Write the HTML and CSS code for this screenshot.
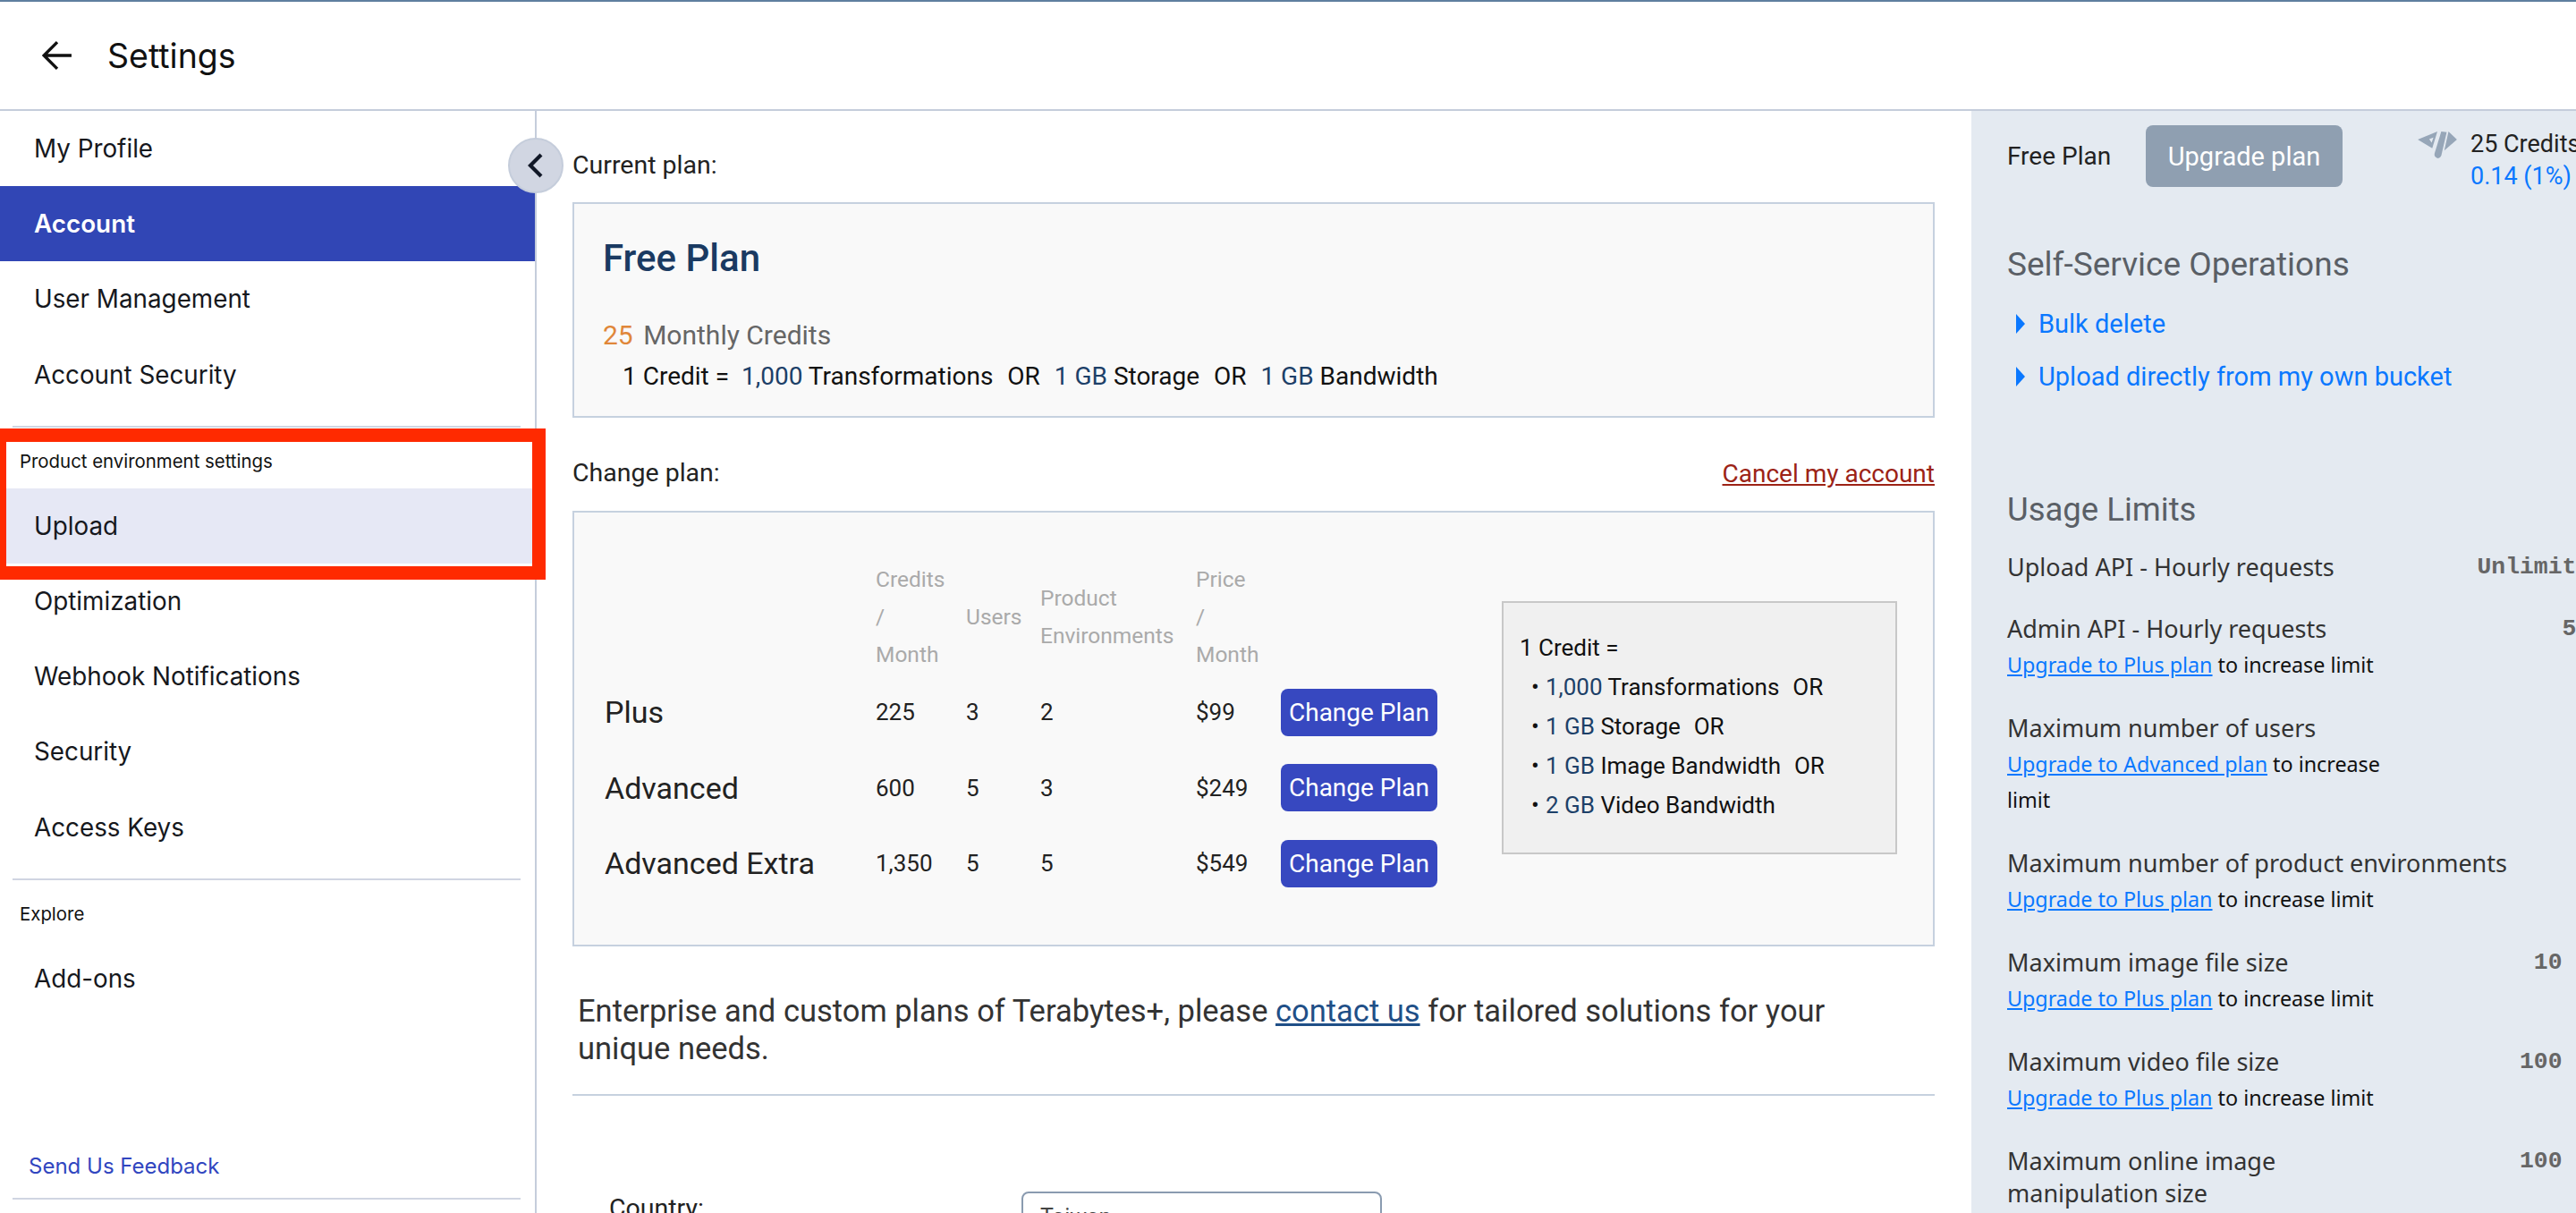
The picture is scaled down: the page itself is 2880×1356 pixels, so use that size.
FILE: index.html

```html
<!DOCTYPE html>
<html lang="en">
<head>
  <meta charset="UTF-8" />
  <title>Settings</title>
  <link rel="stylesheet" href="styles.css">
</head>
<body>

  <header class="topbar">
    <svg class="back" viewBox="0 0 32 32"><path d="M31 16H2M16 2 2 16l14 14"/></svg>
    <span class="topbar-title">Settings</span>
  </header>

  <div class="layout">
    <aside class="sidebar">
      <a class="nav-item">My Profile</a>
      <a class="nav-item active">Account</a>
      <a class="nav-item">User Management</a>
      <a class="nav-item">Account Security</a>
      <div class="nav-line"></div>
      <div class="nav-label">Product environment settings</div>
      <a class="nav-item current">Upload</a>
      <a class="nav-item">Optimization</a>
      <a class="nav-item">Webhook Notifications</a>
      <a class="nav-item">Security</a>
      <a class="nav-item">Access Keys</a>
      <div class="nav-line"></div>
      <div class="nav-label">Explore</div>
      <a class="nav-item">Add-ons</a>
      <div class="sidebar-foot">
        <a class="feedback">Send Us Feedback</a>
        <div class="nav-line"></div>
      </div>
      <button class="collapse"><svg viewBox="0 0 16 24"><path d="M12 4 4 12l8 8"/></svg></button>
      <div class="highlight"></div>
    </aside>

    <main class="content">
      <div class="section-label">Current plan:</div>
      <section class="box plan-box">
        <h1>Free Plan</h1>
        <div class="monthly"><span class="orange">25</span> Monthly Credits</div>
        <div class="equals">1 Credit = &nbsp;<span class="num">1,000</span> Transformations &nbsp;<span class="or">OR</span> &nbsp;<span class="num">1 GB</span> Storage &nbsp;<span class="or">OR</span> &nbsp;<span class="num">1 GB</span> Bandwidth</div>
      </section>

      <div class="change-row">
        <div class="section-label">Change plan:</div>
        <a class="cancel">Cancel my account</a>
      </div>
      <section class="box change-box">
        <table class="plans">
          <thead>
            <tr>
              <th class="c-name"></th>
              <th class="c-credits">Credits<br>/<br>Month</th>
              <th class="c-users">Users</th>
              <th class="c-env">Product<br>Environments</th>
              <th class="c-price">Price<br>/<br>Month</th>
              <th class="c-btn"></th>
            </tr>
          </thead>
          <tbody>
            <tr><td class="plan-name">Plus</td><td>225</td><td>3</td><td>2</td><td>$99</td><td><button class="btn">Change Plan</button></td></tr>
            <tr><td class="plan-name">Advanced</td><td>600</td><td>5</td><td>3</td><td>$249</td><td><button class="btn">Change Plan</button></td></tr>
            <tr><td class="plan-name">Advanced Extra</td><td>1,350</td><td>5</td><td>5</td><td>$549</td><td><button class="btn">Change Plan</button></td></tr>
          </tbody>
        </table>
        <div class="credit-box">
          <div>1 Credit =</div>
          <ul>
            <li><span class="num">1,000</span> Transformations &nbsp;<span class="or">OR</span></li>
            <li><span class="num">1 GB</span> Storage &nbsp;<span class="or">OR</span></li>
            <li><span class="num">1 GB</span> Image Bandwidth &nbsp;<span class="or">OR</span></li>
            <li><span class="num">2 GB</span> Video Bandwidth</li>
          </ul>
        </div>
      </section>

      <p class="enterprise">Enterprise and custom plans of Terabytes+, please <a>contact us</a> for tailored solutions for your unique needs.</p>
      <hr class="rule">

      <div class="form-row">
        <label>Country:</label>
        <div class="fake-select">Taiwan</div>
      </div>
    </main>

    <aside class="panel">
      <div class="panel-top">
        <span class="panel-plan">Free Plan</span>
        <button class="upgrade">Upgrade plan</button>
        <svg class="gauge" viewBox="0 0 130 92">
          <path fill-rule="evenodd" d="M0 27 65 0 48 56ZM38 25l14-5-6 17Z"/>
          <path d="M78 0 96 2 78 80Q70 96 58 84 54 80 56 72Z"/>
          <path d="M102 0 130 27 88 63Z"/>
        </svg>
        <div class="credits">
          <div>25 Credits</div>
          <div class="used">0.14 (1%)</div>
        </div>
      </div>

      <h2 class="ops-title">Self-Service Operations</h2>
      <a class="op first"><i class="tri"></i>Bulk delete</a>
      <a class="op"><i class="tri"></i>Upload directly from my own bucket</a>

      <h2 class="usage-title">Usage Limits</h2>

      <div class="limit top">
        <div class="limit-name">Upload API - Hourly requests</div>
        <div class="limit-val">Unlimited</div>
      </div>
      <div class="limit">
        <div class="limit-name">Admin API - Hourly requests</div>
        <div class="limit-val">500</div>
        <div class="limit-sub"><a>Upgrade to Plus plan</a> to increase limit</div>
      </div>
      <div class="limit">
        <div class="limit-name">Maximum number of users</div>
        <div class="limit-val"></div>
        <div class="limit-sub"><a>Upgrade to Advanced plan</a> to increase limit</div>
      </div>
      <div class="limit">
        <div class="limit-name">Maximum number of product environments</div>
        <div class="limit-val"></div>
        <div class="limit-sub"><a>Upgrade to Plus plan</a> to increase limit</div>
      </div>
      <div class="limit">
        <div class="limit-name">Maximum image file size</div>
        <div class="limit-val">10 MB</div>
        <div class="limit-sub"><a>Upgrade to Plus plan</a> to increase limit</div>
      </div>
      <div class="limit">
        <div class="limit-name">Maximum video file size</div>
        <div class="limit-val">100 MB</div>
        <div class="limit-sub"><a>Upgrade to Plus plan</a> to increase limit</div>
      </div>
      <div class="limit">
        <div class="limit-name">Maximum online image<br>manipulation size</div>
        <div class="limit-val">100 MB</div>
      </div>
    </aside>
  </div>

</body>
</html>
```

FILE: styles.css

```css
* { box-sizing: border-box; }
html, body { margin: 0; height: 1356px; overflow: hidden; }
body { width: 2880px; background: white; color: #111; font-family: Roboto, Arial, sans-serif; border-top: 2px solid #5f7f9f; }
a { cursor: pointer; }

.topbar { height: 122px; display: flex; align-items: center; border-bottom: 2px solid #c5cddb; padding-left: 47px; }
.back { width: 34px; height: 34px; fill: none; stroke: #111; stroke-width: 3.2; }
.topbar-title { font-family: Inter, Arial, sans-serif; font-size: 37.5px; margin-left: 39px; }

.layout { display: flex; width: 2960px; height: 1232px; }

.sidebar { position: relative; flex: none; width: 600px; border-right: 2px solid #c5cddb; display: flex; flex-direction: column; font-family: Inter, Arial, sans-serif; }
.nav-item { height: 84.2px; flex: none; display: flex; align-items: center; padding-left: 38px; font-size: 27.8px; color: #16181d; }
.nav-item.active { background: #3146b5; color: white; font-weight: 600; }
.nav-item.current { background: #e6e8f5; }
.nav-line { height: 2px; margin: 15px 16px 0 14px; background: #d0d5e2; flex: none; }
.nav-label { font-size: 20.4px; padding: 8px 0 0 22px; height: 68px; flex: none; display: flex; align-items: center; }
.sidebar-foot { margin-top: auto; padding-bottom: 15px; }
.feedback { display: block; font-size: 24px; color: #3146c0; padding-left: 32px; margin-bottom: 21px; }
.collapse { position: absolute; top: 30px; right: -32px; width: 62px; height: 62px; border-radius: 50%; border: 2px solid #c5cddb; background: #d1d6e2; padding: 0; display: flex; align-items: center; justify-content: center; z-index: 2; }
.collapse svg { width: 24px; height: 36px; fill: none; stroke: #111827; stroke-width: 2.8; }
.highlight { position: absolute; top: 355px; left: -8px; width: 618px; height: 169px; border: 15px solid #ff2a00; z-index: 3; }

.content { flex: none; width: 1604px; padding: 42px 41px 0 40px; font-size: 28.5px; overflow: hidden; }
.section-label { line-height: 38px; color: #222; }
.box { border: 2px solid #c6d1df; background: #f9f9f9; }
.plan-box { height: 241px; margin-top: 22px; padding: 36px 0 0 32px; }
.plan-box h1 { margin: 0; font-size: 42px; line-height: 50px; font-weight: 500; color: #1a3a62; }
.monthly { margin-top: 39px; font-size: 30px; line-height: 44px; color: #666; }
.orange { color: #e0873a; margin-right: 4px; }
.equals { margin: 2px 0 0 22px; font-size: 28px; line-height: 44px; color: #111; }
.num { color: #1d4068; }
.or { margin: 0 2px; }

.change-row { display: flex; justify-content: space-between; align-items: center; margin-top: 43px; }
.cancel { color: #9c2316; text-decoration: underline; font-size: 28px; }
.change-box { display: flex; margin-top: 23px; padding: 54px 0 48px 34px; }

.plans { border-collapse: collapse; table-layout: fixed; width: 931px; flex: none; font-size: 26px; }
.plans th { padding: 0 0 1px; font-weight: 400; font-size: 24.5px; line-height: 42px; color: #aaa; text-align: left; vertical-align: middle; }
.plans td { padding: 0; height: 84.5px; color: #222; }
.c-name { width: 303px; }
.c-credits { width: 101px; }
.c-users { width: 83px; }
.c-env { width: 174px; }
.c-price { width: 95px; }
.plans .plan-name { font-size: 34px; }
.btn { width: 175px; height: 53px; border: none; border-radius: 8px; background: #3748c0; color: white; font-family: inherit; font-size: 28px; padding: 0; }

.credit-box { flex: none; width: 442px; height: 283px; margin: 45px 0 0 72px; padding: 28px 18px; border: 2px solid #c8c8c8; background: #f0f0f0; font-size: 26px; line-height: 44px; color: #111; }
.credit-box ul { list-style: none; margin: 0; padding: 0; }
.credit-box li { padding-left: 29px; position: relative; }
.credit-box li::before { content: "\2022"; position: absolute; left: 13px; }

.enterprise { max-width: 1440px; margin: 51px 0 0 6px; font-size: 34.5px; line-height: 42px; color: #333; }
.enterprise a { color: #1f4f87; text-decoration: underline; }
.rule { border: none; height: 2px; background: #c6d1df; margin: 30px 0 0; }

.form-row { display: flex; margin-top: 107px; padding-left: 41px; }
.form-row label { width: 461px; line-height: 38px; color: #222; }
.fake-select { width: 403px; height: 62px; border: 2px solid #8a9bb0; border-radius: 8px; padding: 12px 19px; font-size: 25px; color: #444; }

.panel { flex: none; width: 756px; background: #e4eaf1; padding: 16px 48px 0 40px; }
.panel-top { display: flex; align-items: flex-start; }
.panel-plan { font-size: 28px; line-height: 69px; color: #222; width: 155px; }
.upgrade { width: 220px; height: 69px; border: none; border-radius: 8px; background: #8f9fb1; color: white; font-family: inherit; font-size: 29px; padding: 0; }
.gauge { width: 44px; height: 31px; margin: 7px 15px 0 84px; fill: #96a6b8; }
.credits { font-size: 27px; line-height: 36px; color: #222; white-space: nowrap; margin-top: 3px; }
.used { color: #0a78ff; }

.panel h2 { margin: 0; font-weight: 400; line-height: 50px; color: #5a5f66; }
.ops-title { padding-top: 56px; font-size: 37px; }
.op { display: flex; align-items: center; margin-top: 19px; font-size: 29px; line-height: 40px; color: #0a78ff; white-space: nowrap; }
.op.first { margin-top: 21px; }
.tri { width: 0; height: 0; margin: 0 15px 0 10px; border-left: 10px solid #0a78ff; border-top: 11px solid transparent; border-bottom: 11px solid transparent; }
.panel .usage-title { margin-top: 104px; font-size: 36.5px; }

.limit { display: grid; grid-template-columns: 1fr auto; margin-top: 33px; font-family: "Noto Sans", Arial, sans-serif; }
.limit.top { margin-top: 21px; }
.limit-name { font-size: 27px; line-height: 36px; color: #333; white-space: nowrap; }
.limit-val { font-family: "Liberation Mono", monospace; font-weight: 700; font-size: 26.4px; line-height: 36px; color: #666; white-space: pre; }
.limit-sub { grid-column: 1 / 3; max-width: 440px; font-size: 23.3px; line-height: 40px; color: #111; margin-top: 2px; }
.limit-sub a { color: #0a78ff; text-decoration: underline; }
```
